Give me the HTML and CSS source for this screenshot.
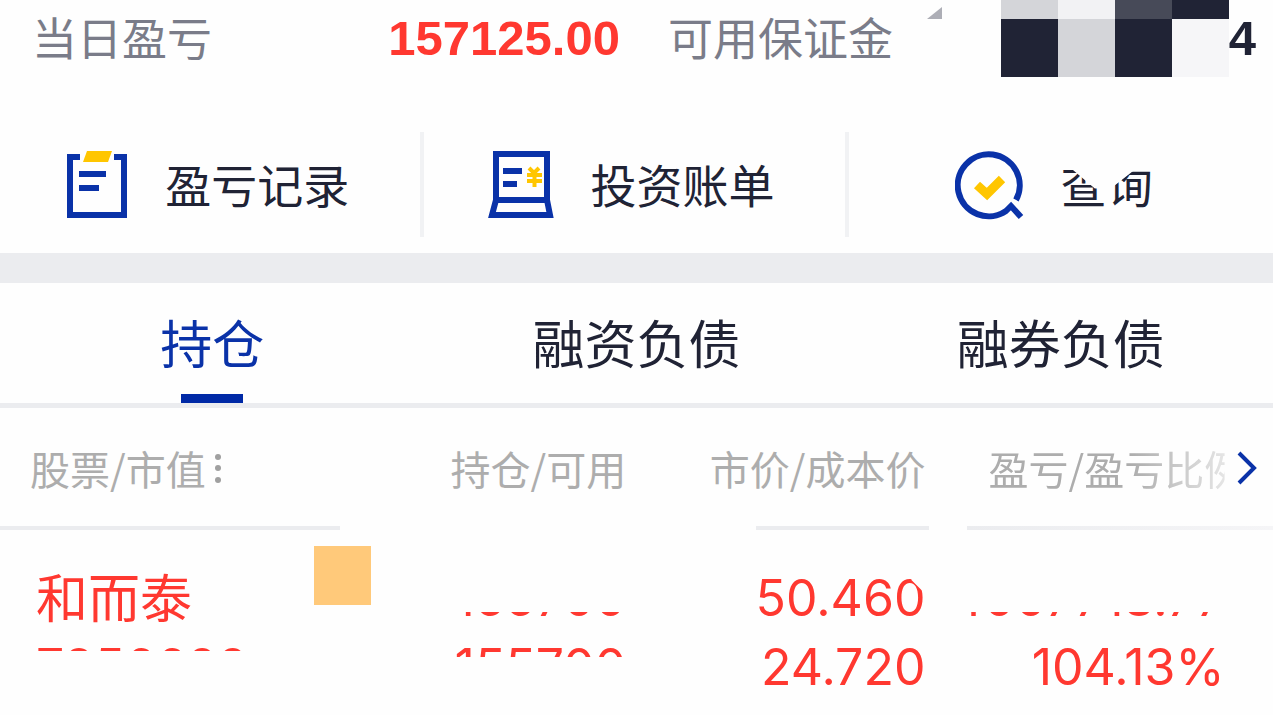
FILE: index.html
```html
<!DOCTYPE html>
<html lang="zh-CN">
<head>
  <meta charset="UTF-8">
  <meta name="viewport" content="width=device-width, initial-scale=1.0">
  <title>持仓</title>
  <link rel="stylesheet" href="styles.css">
</head>
<body>

  <section class="summary">
    <div class="summary-item">
      <span class="summary-label">当日盈亏</span>
      <strong class="summary-value up">157125.00</strong>
    </div>
    <div class="summary-item">
      <span class="summary-label">可用保证金</span>
      <span class="corner"></span>
      <div class="summary-amount">
        <div class="mosaic">
          <i class="light"></i><i class="pale"></i><i class="mid"></i><i class="dark"></i>
          <i class="dark"></i><i class="light"></i><i class="dark"></i><i class="faint"></i>
        </div>
        <strong class="summary-value">4</strong>
      </div>
    </div>
  </section>

  <nav class="menu">
    <a href="#records" class="menu-item">
      <svg width="64" height="70" viewBox="0 0 64 70" fill="none" stroke="#0a32a8" stroke-width="6">
        <path d="M15 7H5V65H59V7H49"/>
        <path d="M14 24H41M14 38H34"/>
        <path d="M22 1H47L43 12H18Z" fill="#ffc600" stroke="none"/>
      </svg>
      <span class="menu-text">盈亏记录</span>
    </a>
    <a href="#bill" class="menu-item">
      <svg width="66" height="70" viewBox="0 0 66 70" fill="none" stroke="#0a32a8" stroke-width="6">
        <path d="M8 50V4H59V50"/>
        <path d="M8 50H59L62 65H4Z"/>
        <path d="M15 21H34M15 34H29"/>
        <path d="M41 18L46 23L51 18M39 25H54M39 31H54M46.500 23V37" stroke="#ffc600" stroke-width="4"/>
      </svg>
      <span class="menu-text">投资账单</span>
    </a>
    <a href="#query" class="menu-item">
      <svg width="70" height="70" viewBox="0 0 70 70" fill="none" stroke="#0a32a8" stroke-width="6">
        <path d="M61 50A31 31 0 1 0 51 61L56 56L66 67"/>
        <path d="M22 35L32 44L47 29" stroke="#ffc600" stroke-width="9"/>
      </svg>
      <span class="menu-text worn">查询</span>
    </a>
  </nav>

  <div class="tabs" role="tablist">
    <button class="tab active" role="tab" aria-selected="true">持仓</button>
    <button class="tab" role="tab" aria-selected="false">融资负债</button>
    <button class="tab" role="tab" aria-selected="false">融券负债</button>
  </div>

  <table class="positions">
    <colgroup>
      <col class="col-name">
      <col class="col-hold">
      <col class="col-price">
      <col class="col-profit">
      <col class="col-more">
    </colgroup>
    <thead>
      <tr>
        <th class="name">
          <div class="sort">股票/市值<svg width="8" height="30" viewBox="0 0 8 30" fill="#a0a0a0"><circle cx="4" cy="4" r="3"/><circle cx="4" cy="15" r="3"/><circle cx="4" cy="27" r="3"/></svg></div>
        </th>
        <th>持仓/可用</th>
        <th>市价/成本价</th>
        <th><div class="fade">盈亏/盈亏比例</div></th>
        <th>
          <button class="more" aria-label="更多">
            <svg width="24" height="36" viewBox="0 0 24 36" fill="none" stroke="#0a32a8" stroke-width="4"><path d="M3 3L18 18L3 33"/></svg>
          </button>
        </th>
      </tr>
    </thead>
    <tbody>
      <tr>
        <td class="name">
          <span class="stock">和而泰</span>
          <span class="line cut-bottom">7856622</span>
          <span class="patch"></span>
        </td>
        <td>
          <span class="line cut-top">155700</span>
          <span class="line cut-bottom deep">155700</span>
        </td>
        <td>
          <span class="line nick">50.460</span>
          <span class="line">24.720</span>
        </td>
        <td>
          <span class="line long cut-top">+4007718.77</span>
          <span class="line">104.13%</span>
        </td>
        <td></td>
      </tr>
    </tbody>
  </table>

</body>
</html>
```
FILE: styles.css
```css
* {
  box-sizing: border-box;
}

body {
  margin: 0;
  font-family: "Noto Sans CJK SC", sans-serif;
  color: #202335;
  background-color: #fefefe;
}

a {
  color: inherit;
  text-decoration: none;
}

button {
  padding: 0;
  border: none;
  background: none;
  font: inherit;
  color: inherit;
  cursor: pointer;
}

.summary {
  display: grid;
  grid-template-columns: 1fr 1fr;
  gap: 48px;
  height: 78px;
  padding: 0 17px 0 32px;
}

.summary-item {
  position: relative;
  display: flex;
  align-items: flex-start;
  justify-content: space-between;
}

.summary-label {
  font-size: 45px;
  line-height: 74px;
  color: #7a7c89;
}

.summary-value {
  font-family: "Liberation Sans", Arial, sans-serif;
  font-size: 49px;
  line-height: 76px;
}

.up {
  color: #ff3830;
}

.summary-amount {
  display: flex;
}

/* small folded corner next to the label */
.corner {
  position: absolute;
  left: 44%;
  top: 7px;
  border-left: 15px solid transparent;
  border-bottom: 12px solid #adaeb6;
}

.mosaic {
  display: grid;
  grid-template-columns: repeat(4, 57px);
  grid-template-rows: 19px 58px;
}

.mosaic .dark { background-color: #202335; }
.mosaic .mid { background-color: #474a58; }
.mosaic .light { background-color: #d4d5d9; }
.mosaic .pale { background-color: #f2f2f4; }
.mosaic .faint { background-color: #f6f6f8; }

.menu {
  display: grid;
  grid-template-columns: repeat(3, 1fr);
  padding: 54px 0 16px;
  border-bottom: 30px solid #ebecef;
  box-sizing: content-box;
}

.menu-item {
  display: flex;
  align-items: center;
  justify-content: center;
  gap: 36px;
  height: 105px;
  padding-right: 6px;
  border-right: 4px solid #f1f2f4;
}

.menu-item:last-child {
  border-right: none;
  padding-right: 14px;
}

.menu-text {
  margin-bottom: 4px;
  font-size: 46px;
  line-height: 60px;
}

.worn {
  clip-path: polygon(0 0, 8px 14px, 34px 36px, 50px 36px, 78px 14px, 100% 14px, 100% 100%, 0 100%);
}

.tabs {
  display: grid;
  grid-template-columns: repeat(3, 1fr);
  border-bottom: 5px solid #ebecef;
}

.tab {
  display: flex;
  flex-direction: column;
  align-items: center;
  height: 120px;
  padding-top: 19px;
  font-size: 52px;
  line-height: 80px;
}

.tab.active {
  color: #0a32a8;
}

.tab.active::after {
  content: "";
  width: 62px;
  height: 9px;
  margin-top: auto;
  background-color: #0029a6;
}

.positions {
  width: 100%;
  table-layout: fixed;
  border-collapse: collapse;
}

.col-name { width: 30%; }
.col-hold { width: 19.2%; }
.col-price { width: 23.5%; }
.col-profit { width: 23.5%; }

.positions thead tr {
  background:
    linear-gradient(90deg, #ebecef 26.7%, transparent 26.7%, transparent 59.4%, #ebecef 59.4%, #ebecef 73%, transparent 73%, transparent 76%, #ebecef 76%, #f5f5f7) bottom / 100% 4px no-repeat;
}

.positions th {
  height: 122px;
  padding: 0 0 3px;
  font-size: 40px;
  font-weight: 400;
  line-height: 60px;
  text-align: right;
  white-space: nowrap;
  color: #adadad;
}

.positions .name {
  position: relative;
  padding-left: 30px;
  text-align: left;
}

.sort {
  display: flex;
  align-items: center;
  gap: 8px;
}

.fade {
  width: 236px;
  margin-left: auto;
  text-align: left;
  clip-path: inset(0);
  mask-image: linear-gradient(90deg, #000 60%, rgba(0, 0, 0, 0.3));
}

.more {
  display: block;
  margin-left: 11px;
}

.more svg {
  display: block;
}

.positions td {
  padding: 34px 0 11px;
  vertical-align: top;
  text-align: right;
  color: #ff3830;
}

.stock,
.line {
  display: block;
  font-size: 52px;
  line-height: 69px;
  white-space: nowrap;
}

.stock {
  margin: 0 0 6px 6px;
  line-height: 63px;
}

.line {
  font-family: Inter, sans-serif;
  font-size: 50px;
}

/* wider than its column, grows to the left */
.long {
  display: flex;
  justify-content: flex-end;
}

.name .line {
  margin-left: 6px;
}

/* partly hidden amounts */
.cut-top {
  clip-path: inset(48px 0 0 -40px);
}

.cut-bottom {
  clip-path: inset(0 0 51px 0);
}

.cut-bottom.deep {
  clip-path: inset(0 0 45px 0);
}

.nick {
  clip-path: polygon(0 0, calc(100% - 14px) 0, calc(100% - 14px) 16px, 100% 30px, 100% 100%, 0 100%);
}

.patch {
  position: absolute;
  top: 16px;
  right: 11px;
  width: 57px;
  height: 59px;
  background-color: #ffc97a;
}
```
